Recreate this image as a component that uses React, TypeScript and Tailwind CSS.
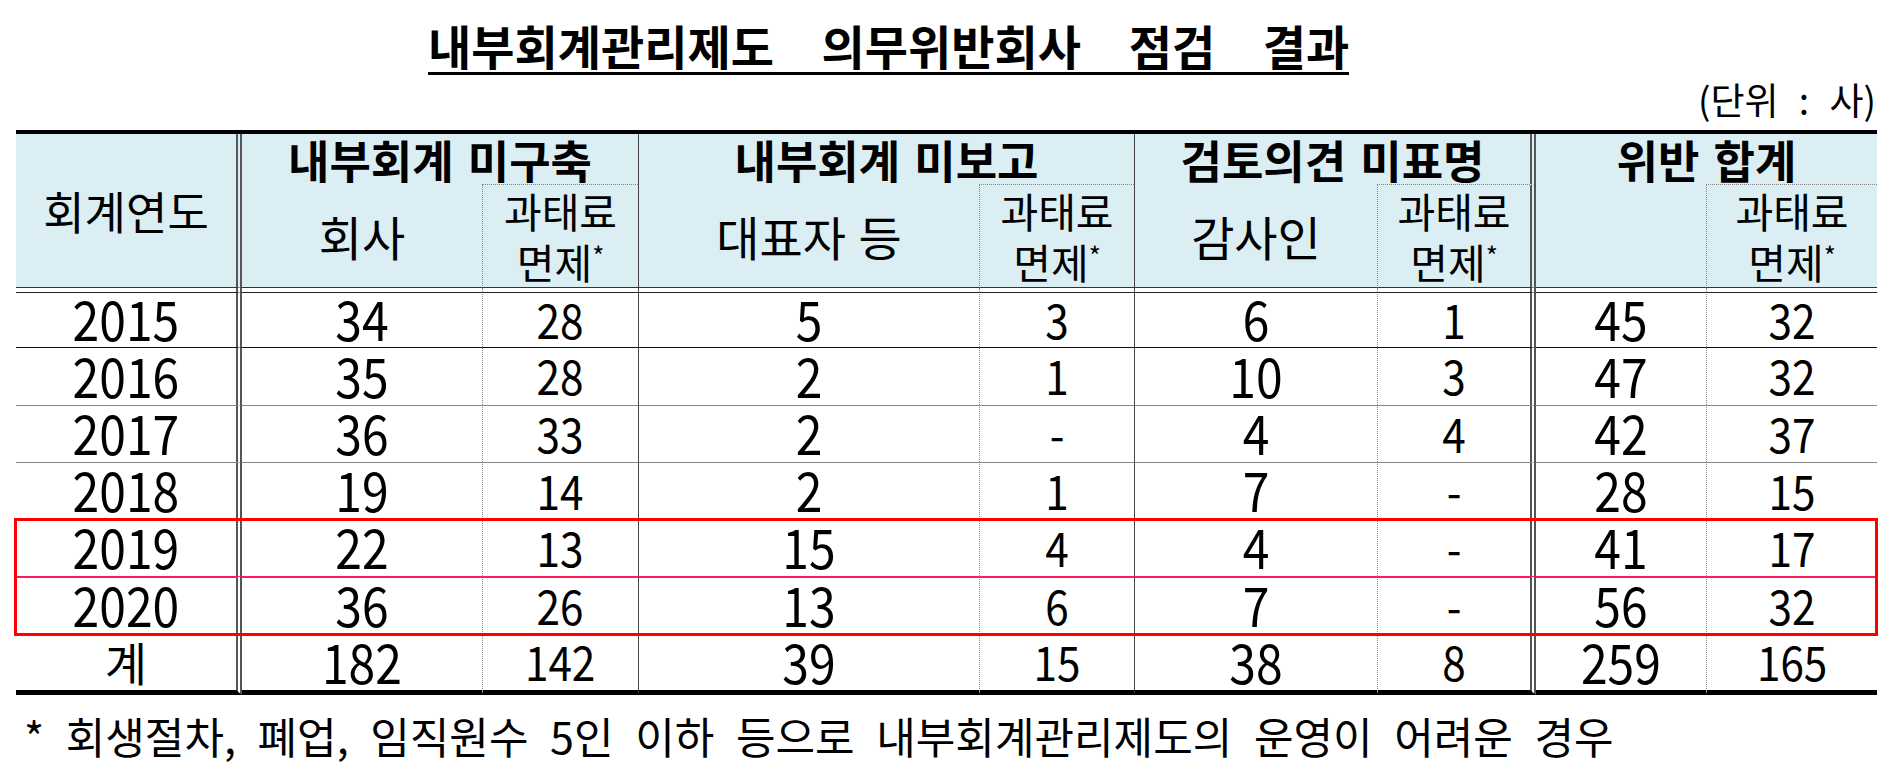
import React from "react";

const FONT = "[font-family:'Noto_Sans_CJK_KR','Noto_Sans',sans-serif]";

const VB = [
  "border-r-[6px] [border-right-style:double] border-r-[#555]",
  "",
  "border-l [border-left-style:dotted] border-l-[#888]",
  "border-l border-l-[#444]",
  "border-l [border-left-style:dotted] border-l-[#888]",
  "border-l border-l-[#444]",
  "border-l [border-left-style:dotted] border-l-[#888] border-r-[6px] [border-right-style:double] border-r-[#555]",
  "",
  "border-l [border-left-style:dotted] border-l-[#888]",
];

const ROW_TOP = [
  "border-t border-t-[#222]",
  "border-t border-t-[#111]",
  "border-t border-t-[#888]",
  "border-t border-t-[#888]",
  "border-t border-t-[#888]",
  "border-t-2 border-t-[#ff1a5c]",
  "border-t border-t-[#888] border-b-[5px] border-b-black",
];

const ROWS: (string | number)[][] = [
  ["2015", 34, 28, 5, 3, 6, 1, 45, 32],
  ["2016", 35, 28, 2, 1, 10, 3, 47, 32],
  ["2017", 36, 33, 2, "-", 4, 4, 42, 37],
  ["2018", 19, 14, 2, 1, 7, "-", 28, 15],
  ["2019", 22, 13, 15, 4, 4, "-", 41, 17],
  ["2020", 36, 26, 13, 6, 7, "-", 56, 32],
  ["계", 182, 142, 39, 15, 38, 8, 259, 165],
];

function Fine() {
  return (
    <div className="flex flex-col items-center text-[41px] leading-[51px]">
      <span>과태료</span>
      <span>
        면제<sup className="text-[26px]">*</sup>
      </span>
    </div>
  );
}

const HBG = "bg-[#daeef3] flex items-center justify-center";
const GROUP = "text-[45px] leading-none font-bold [word-spacing:4px] whitespace-nowrap";

export default function App() {
  return (
    <div className={`w-[1900px] h-[781px] overflow-hidden bg-white text-black ${FONT}`}>
      {/* title */}
      <div className="h-[80px] pt-[18px] pl-[428px]">
        <span className="inline-block text-[47px] leading-[54px] font-bold border-b-[3px] border-black [word-spacing:37px] whitespace-nowrap">
          내부회계관리제도 의무위반회사 점검 결과
        </span>
      </div>
      {/* unit */}
      <div className="h-[50px] flex justify-end items-start pr-[24px]">
        <span className="text-[37px] leading-[34px] pt-[2px] [word-spacing:12px] whitespace-nowrap">(단위 : 사)</span>
      </div>

      {/* table */}
      <div className="relative ml-[16px] w-[1861px] border-t-4 border-t-black">
        <div className="grid grid-cols-[226px_240px_156px_341px_155px_243px_159px_170px_171px] grid-rows-[50px_104px_4px_55px_58px_57px_57px_57px_58px_61px]">
          {/* header row 1 */}
          <div className={`row-span-2 ${HBG} ${VB[0]} border-b border-b-[#333]`}>
            <span className="text-[45px] leading-none">회계연도</span>
          </div>
          <div className={`col-span-2 ${HBG}`}>
            <span className={GROUP}>내부회계 미구축</span>
          </div>
          <div className={`col-span-2 ${HBG} ${VB[3]}`}>
            <span className={GROUP}>내부회계 미보고</span>
          </div>
          <div className={`col-span-2 ${HBG} ${VB[5]} border-r-[6px] [border-right-style:double] border-r-[#555]`}>
            <span className={GROUP}>검토의견 미표명</span>
          </div>
          <div className={`col-span-2 ${HBG}`}>
            <span className={GROUP}>위반 합계</span>
          </div>

          {/* header row 2 */}
          <div className={`${HBG} border-b border-b-[#333]`}>
            <span className="text-[47px] leading-none">회사</span>
          </div>
          <div className={`${HBG} ${VB[2]} border-t [border-top-style:dotted] border-t-[#888] border-b border-b-[#333]`}>
            <Fine />
          </div>
          <div className={`${HBG} ${VB[3]} border-b border-b-[#333]`}>
            <span className="text-[47px] leading-none [word-spacing:2px] whitespace-nowrap">대표자 등</span>
          </div>
          <div className={`${HBG} ${VB[4]} border-t [border-top-style:dotted] border-t-[#888] border-b border-b-[#333]`}>
            <Fine />
          </div>
          <div className={`${HBG} ${VB[5]} border-b border-b-[#333]`}>
            <span className="text-[47px] leading-none">감사인</span>
          </div>
          <div className={`${HBG} ${VB[6]} border-t [border-top-style:dotted] border-t-[#888] border-b border-b-[#333]`}>
            <Fine />
          </div>
          <div className={`${HBG} border-b border-b-[#333]`} />
          <div className={`${HBG} ${VB[8]} border-t [border-top-style:dotted] border-t-[#888] border-b border-b-[#333]`}>
            <Fine />
          </div>

          {/* spacer row (double line gap) */}
          {VB.map((v, i) => (
            <div key={`sp${i}`} className={`bg-white ${v}`} />
          ))}

          {/* body */}
          {ROWS.map((row, r) =>
            row.map((val, c) => {
              const big = c === 0 || c % 2 === 1;
              const isLabel = val === "계";
              return (
                <div
                  key={`${r}-${c}`}
                  className={`flex items-center justify-center bg-white pb-[4px] ${ROW_TOP[r]} ${VB[c]}`}
                >
                  {isLabel ? (
                    <span className="text-[46px] leading-none">계</span>
                  ) : big ? (
                    <span className="inline-block text-[54px] leading-none scale-x-[0.89]">{val}</span>
                  ) : (
                    <span className="inline-block text-[47px] leading-none scale-x-[0.9]">{val}</span>
                  )}
                </div>
              );
            })
          )}
        </div>

        {/* red highlight box over 2019-2020 */}
        <div className="absolute left-[-2px] top-[384px] w-[1864px] h-[118px] border-[3px] border-[#ff0000] pointer-events-none" />
      </div>

      {/* footnote */}
      <div className="pt-[12px] pl-[24px]">
        <span className="text-[43px] leading-[56px] [word-spacing:12px] whitespace-nowrap">
          * 회생절차, 폐업, 임직원수 5인 이하 등으로 내부회계관리제도의 운영이 어려운 경우
        </span>
      </div>
    </div>
  );
}
